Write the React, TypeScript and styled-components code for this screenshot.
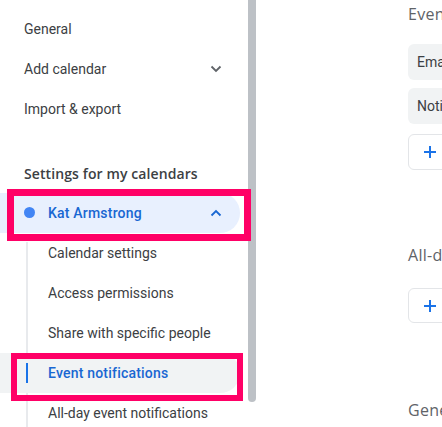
import React from "react";
import styled, { createGlobalStyle } from "styled-components";

const Global = createGlobalStyle`
  html, body { margin: 0; padding: 0; background: #fff; overflow: hidden; }
  body { font-family: Roboto, "Liberation Sans", Arial, sans-serif; width: 442px; height: 427px; }
`;

const Page = styled.div`
  display: flex;
  align-items: flex-start;
  width: 442px;
  height: 427px;
  overflow: hidden;
`;

const Sidebar = styled.nav`
  width: 248px;
  flex: none;
  padding-top: 9px;
  display: flex;
  flex-direction: column;
`;

const Scrollbar = styled.div`
  width: 8px;
  height: 402px;
  flex: none;
  background: #bdc1c6;
  border-radius: 0 0 4px 4px;
`;

const Item = styled.div<{ $indent?: boolean; $active?: "blue" | "gray" }>`
  position: relative;
  flex: none;
  height: 40px;
  display: flex;
  align-items: center;
  padding-left: ${(p) => (p.$indent ? 48 : 24)}px;
  padding-right: 16px;
  width: 240px;
  box-sizing: border-box;
  font-size: 14px;
  color: ${(p) => (p.$active ? "#1967d2" : "#3c4043")};
  font-weight: ${(p) => (p.$active ? 500 : 400)};
  letter-spacing: ${(p) => (p.$active ? "0.2px" : "0")};
  background: ${(p) =>
    p.$active === "blue" ? "#e8f0fe" : p.$active === "gray" ? "#f1f3f4" : "transparent"};
  border-radius: 0 20px 20px 0;
`;

const Label = styled.span`
  flex: 1;
  white-space: nowrap;
`;

const Heading = styled.div`
  flex: none;
  margin-top: 24px;
  height: 40px;
  display: flex;
  align-items: center;
  padding-left: 24px;
  font-family: "Open Sans", Roboto, sans-serif;
  font-weight: 600;
  font-size: 14px;
  letter-spacing: 0.1px;
  color: #3c4043;
  white-space: nowrap;
`;

const Dot = styled.span`
  position: absolute;
  left: 24px;
  top: 14px;
  width: 11px;
  height: 11px;
  border-radius: 50%;
  background: #4285f4;
`;

const SubList = styled.div`
  position: relative;
  flex: none;
  display: flex;
  flex-direction: column;
  &::before {
    content: "";
    position: absolute;
    left: 26px;
    top: 9px;
    bottom: -40px;
    width: 2px;
    background: #e8eaed;
  }
`;

const ActiveBar = styled.span`
  position: absolute;
  left: 26px;
  top: 10px;
  width: 2px;
  height: 20px;
  background: #1a73e8;
`;

const Annotation = styled.span<{ $l: number; $t: number; $w: number; $h: number; $b: number }>`
  position: absolute;
  left: ${(p) => p.$l}px;
  top: ${(p) => p.$t}px;
  width: ${(p) => p.$w}px;
  height: ${(p) => p.$h}px;
  border: ${(p) => p.$b}px solid #ff0066;
  box-sizing: border-box;
  pointer-events: none;
  z-index: 2;
`;

const Main = styled.main`
  flex: none;
  padding-left: 152px;
  padding-top: 2px;
  display: flex;
  flex-direction: column;
  width: 400px;
`;

const SectionTitle = styled.div<{ $mt: number }>`
  flex: none;
  margin-top: ${(p) => p.$mt}px;
  font-family: "Open Sans", Roboto, sans-serif;
  font-size: 16px;
  line-height: 24px;
  letter-spacing: 0.3px;
  color: #5f6368;
  white-space: nowrap;
`;

const Chip = styled.div<{ $mt: number }>`
  flex: none;
  margin-top: ${(p) => p.$mt}px;
  height: 36px;
  width: 300px;
  box-sizing: border-box;
  padding-left: 9px;
  display: flex;
  align-items: center;
  background: #f1f3f4;
  border-radius: 6px;
  font-size: 14px;
  color: #3c4043;
  white-space: nowrap;
`;

const AddButton = styled.div<{ $mt: number; $h: number }>`
  flex: none;
  margin-top: ${(p) => p.$mt}px;
  height: ${(p) => p.$h}px;
  width: 300px;
  box-sizing: border-box;
  border: 1px solid #e3e5e8;
  border-radius: 6px;
  display: flex;
  align-items: center;
  padding-left: 14px;
`;

const Chevron = ({ up, color }: { up?: boolean; color: string }) => (
  <svg width="12" height="8" viewBox="0 0 12 8" style={{ flex: "none", marginRight: 2 }}>
    <path
      d={up ? "M1.5 6.5 L6 2 L10.5 6.5" : "M1.5 1.5 L6 6 L10.5 1.5"}
      fill="none"
      stroke={color}
      strokeWidth="1.8"
    />
  </svg>
);

const Plus = () => (
  <svg width="14" height="14" viewBox="0 0 14 14">
    <path d="M7 1 V13 M1 7 H13" stroke="#1a73e8" strokeWidth="2" fill="none" />
  </svg>
);

export default function App() {
  return (
    <>
      <Global />
      <Page>
        <Sidebar>
          <Item>
            <Label>General</Label>
          </Item>
          <Item>
            <Label>Add calendar</Label>
            <Chevron color="#5f6368" />
          </Item>
          <Item>
            <Label>Import &amp; export</Label>
          </Item>
          <Heading>Settings for my calendars</Heading>
          <Item $indent $active="blue">
            <Dot />
            <Label>Kat Armstrong</Label>
            <Chevron up color="#1967d2" />
            <Annotation $l={7} $t={-4} $w={244} $h={52} $b={7} />
          </Item>
          <SubList>
            <Item $indent>
              <Label>Calendar settings</Label>
            </Item>
            <Item $indent>
              <Label>Access permissions</Label>
            </Item>
            <Item $indent>
              <Label>Share with specific people</Label>
            </Item>
            <Item $indent $active="gray">
              <ActiveBar />
              <Label>Event notifications</Label>
              <Annotation $l={11} $t={0} $w={232} $h={48} $b={6} />
            </Item>
            <Item $indent>
              <Label>All-day event notifications</Label>
            </Item>
          </SubList>
        </Sidebar>
        <Scrollbar />
        <Main>
          <SectionTitle $mt={0}>Event notifications</SectionTitle>
          <Chip $mt={18}>Email</Chip>
          <Chip $mt={8}>Notification</Chip>
          <AddButton $mt={10} $h={36}>
            <Plus />
          </AddButton>
          <SectionTitle $mt={73}>All-day event notifications</SectionTitle>
          <AddButton $mt={21} $h={35}>
            <Plus />
          </AddButton>
          <SectionTitle $mt={75}>General</SectionTitle>
        </Main>
      </Page>
    </>
  );
}
